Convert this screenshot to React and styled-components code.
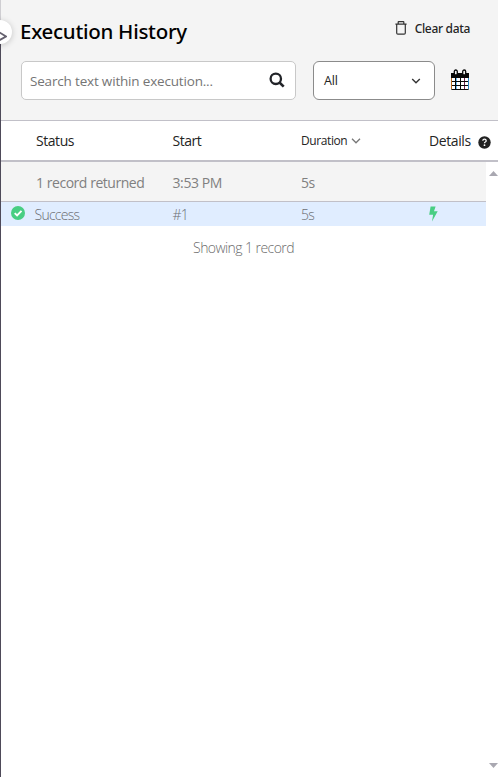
import React from 'react';
import styled, { createGlobalStyle } from 'styled-components';

const GlobalStyle = createGlobalStyle`
  * { box-sizing: border-box; }
  body { margin: 0; background: #fff; font-family: "Open Sans", "Noto Sans", sans-serif; overflow: hidden; }
`;

const Panel = styled.main`
  position: relative;
  height: 777px;
  width: 498px;
  padding-left: 1px;
  background: linear-gradient(to bottom, #cfced2 30px, #4e4a59 30px) left / 1px 100% no-repeat #fff;
  display: flex;
  flex-direction: column;
  overflow: hidden;
`;

const CollapseButton = styled.button`
  position: absolute;
  left: -12px;
  top: 20px;
  width: 24px;
  height: 24px;
  padding: 0;
  border: 0;
  border-radius: 50%;
  background: #fff;
  box-shadow: 0 1px 6px rgba(0, 0, 0, 0.2);
  svg { display: block; margin: 7px 0 0 9px; }
`;

const Header = styled.header`
  height: 121px;
  flex: none;
  background: #f4f4f4;
  border-bottom: 1px solid #c1c0c8;
  padding: 16px 28px 0 20px;
`;

const TitleRow = styled.div`
  display: flex;
  justify-content: space-between;
  height: 45px;
`;

const Label = styled.span`
  display: block;
  white-space: nowrap;
  font-size: ${(p) => p.$size || 14}px;
  font-weight: ${(p) => p.$weight || 400};
  letter-spacing: ${(p) => p.$spacing ?? -0.4}px;
  line-height: 20px;
  color: ${(p) => p.$color || '#242424'};
`;

const Title = styled.h1`
  margin: 0 0 0 -1px;
  font-family: "Noto Sans", "Open Sans", sans-serif;
  font-size: 20.5px;
  font-weight: 500;
  letter-spacing: -0.28px;
  line-height: 31px;
  color: #000;
  white-space: nowrap;
`;

const ClearButton = styled.button`
  display: flex;
  gap: 8px;
  height: 24px;
  border: 0;
  padding: 3px 0 0;
  background: none;
  font-family: "Noto Sans", "Open Sans", sans-serif;
  svg { margin-top: 2px; }
`;

const Filters = styled.div`
  display: flex;
  align-items: flex-start;
`;

const SearchBox = styled.div`
  width: 275px;
  height: 39px;
  display: flex;
  align-items: center;
  justify-content: space-between;
  padding: 0 10px 0 8px;
  border: 1px solid #c8c8c8;
  border-radius: 5px;
  background: #fff;
  svg { margin-top: -2px; }
`;

const Select = styled.div`
  width: 122px;
  height: 39px;
  margin-left: 17px;
  display: flex;
  align-items: center;
  justify-content: space-between;
  padding: 0 13px 0 10px;
  border: 1px solid #8b8b8b;
  border-radius: 6px;
  background: #fff;
`;

const CalendarButton = styled.button`
  margin: 8px 0 0 15px;
  padding: 0;
  border: 0;
  background: none;
  svg { display: block; }
`;

const Grid = styled.div`
  display: grid;
  grid-template-columns: ${(p) => p.$lead || 35}px ${(p) => 171.5 - (p.$lead || 35)}px 128.5px 128px 1fr;
  align-items: center;
`;

const TableHead = styled(Grid)`
  height: 41px;
  flex: none;
  padding-top: 1px;
  border-bottom: 2px solid #c1c0c8;
`;

const HeadCell = styled.div`
  display: flex;
  align-items: center;
  gap: ${(p) => p.$gap || 0}px;
`;

const HelpIcon = styled.svg`
  margin-top: 2px;
`;

const Body = styled.div`
  flex: 1;
  display: flex;
`;

const Records = styled.div`
  width: 485px;
`;

const SummaryRow = styled(Grid)`
  height: 40px;
  padding-top: 2px;
  background: #f4f4f4;
  border-bottom: 1px solid #c1c0c8;
`;

const RecordRow = styled(Grid)`
  height: 24px;
  padding-top: 2px;
  background: #e0edff;
`;

const StatusIcon = styled.div`
  padding-left: 10px;
  margin-top: -4px;
  svg { display: block; }
`;

const BoltIcon = styled.svg`
  margin-top: -2px;
`;

const Footer = styled.div`
  display: flex;
  justify-content: center;
  padding-top: 12px;
`;

const Scrollbar = styled.div`
  width: 12px;
  display: flex;
  flex-direction: column;
  justify-content: space-between;
  padding: 9px 0 9px 3px;
  svg { display: block; }
`;

export default function App() {
  return (
    <>
      <GlobalStyle />
      <Panel>
        <Header>
          <TitleRow>
            <Title>Execution History</Title>
            <ClearButton>
              <svg width="12" height="14" viewBox="0 0 12 14" fill="none" stroke="#333" strokeWidth="1.2">
                <path d="M.4 3.2h11.2M3.2 3V1q0-.4.4-.4h4.8q.4 0 .4.4v2M1.7 3v9q0 1.2 1.2 1.2h6.2q1.2 0 1.2-1.2V3" />
              </svg>
              <Label $size={12} $weight={500} $spacing={-0.32}>Clear data</Label>
            </ClearButton>
          </TitleRow>
          <Filters>
            <SearchBox>
              <Label $color="#757575" $size={13.5} $spacing={-0.18}>Search text within execution...</Label>
              <svg width="16" height="16" viewBox="0 0 16 16" fill="none" stroke="#222429">
                <circle cx="6.8" cy="6.8" r="5.2" strokeWidth="2.3" />
                <path d="M10.5 10.5l4.2 4.2" strokeWidth="2.6" />
              </svg>
            </SearchBox>
            <Select>
              <Label $size={12.5} $spacing={-0.1}>All</Label>
              <svg width="10" height="6" viewBox="0 0 10 6" fill="none" stroke="#333" strokeWidth="1.4">
                <path d="M1.2 1L5 4.7 8.8 1" />
              </svg>
            </Select>
            <CalendarButton>
              <svg width="20" height="22" viewBox="0 0 20 22">
                <path d="M1 4h18v15.5q0 1.5-1.5 1.5h-15Q1 21 1 19.5z" fill="#080808" />
                <path d="M2 9h3v3H2zM6 9h4v3H6zM11 9h3v3h-3zM15 9h3v3h-3zM2 13h3v3H2zM6 13h4v3H6zM11 13h3v3h-3zM15 13h3v3h-3zM2 17h3v3H2zM6 17h4v3H6zM11 17h3v3h-3zM15 17h3v3h-3z" fill="#fff" />
                <rect x="4.3" y="1" width="3" height="5" rx="1.5" fill="#f4f4f4" stroke="#080808" strokeWidth="1.3" />
                <rect x="12.7" y="1" width="3" height="5" rx="1.5" fill="#f4f4f4" stroke="#080808" strokeWidth="1.3" />
                <path d="M6.5 9v3M6.5 13v3M6.5 17v3" stroke="#62baf5" />
                <path d="M14.5 9v3M14.5 13v3M14.5 17v3" stroke="#70204f" />
                <path d="M18.5 9v11" stroke="#2c83c4" />
                <path d="M1.5 9v11" stroke="#b66a20" />
              </svg>
            </CalendarButton>
          </Filters>
        </Header>
        <TableHead>
          <span />
          <Label $spacing={-0.45}>Status</Label>
          <Label $spacing={-0.45}>Start</Label>
          <HeadCell $gap={4}>
            <Label $size={12} $spacing={-0.4}>Duration</Label>
            <svg width="10" height="6" viewBox="0 0 10 6" fill="none" stroke="#777" strokeWidth="1.3">
              <path d="M1 .8L5 4.8 9 .8" />
            </svg>
          </HeadCell>
          <HeadCell $gap={7}>
            <Label $spacing={-0.4}>Details</Label>
            <HelpIcon width="13" height="13" viewBox="0 0 13 13">
              <circle cx="6.5" cy="6.5" r="6.2" fill="#222" />
              <path d="M4.8 4.8q.1-1.6 1.7-1.6t1.7 1.5q0 .8-.9 1.3-.8.4-.8 1.2" fill="none" stroke="#fff" strokeWidth="1.3" />
              <circle cx="6.5" cy="9.2" r=".9" fill="#fff" />
            </HelpIcon>
          </HeadCell>
        </TableHead>
        <Body>
          <Records>
            <SummaryRow>
              <span />
              <Label $color="#808080" $spacing={-0.46}>1 record returned</Label>
              <Label $color="#808080" $spacing={-0.4}>3:53 PM</Label>
              <Label $color="#808080">5s</Label>
              <span />
            </SummaryRow>
            <RecordRow $lead={33.5}>
              <StatusIcon>
                <svg width="14" height="14" viewBox="0 0 14 14">
                  <circle cx="7" cy="7" r="7" fill="#48ce83" />
                  <path d="M3.7 7.1l2.4 2.4 4.4-4.6" fill="none" stroke="#fff" strokeWidth="1.9" />
                </svg>
              </StatusIcon>
              <Label $color="#6c6e73" $weight={300} $spacing={-0.75}>Success</Label>
              <Label $color="#6c6e73" $weight={300} $spacing={-0.8}>#1</Label>
              <Label $color="#6c6e73" $weight={300} $spacing={-0.7}>5s</Label>
              <BoltIcon width="9" height="16" viewBox="0 0 9 16">
                <path d="M1.6.5h5L5 5.3h3.7L3 15.5l1.1-6.7H.2z" fill="#48ce83" />
              </BoltIcon>
            </RecordRow>
            <Footer>
              <Label $color="#6c6c6c" $weight={300} $spacing={-0.57}>Showing 1 record</Label>
            </Footer>
          </Records>
          <Scrollbar>
            <svg width="9" height="5" viewBox="0 0 9 5"><path d="M0 5h9L4.5 0z" fill="#a9a8b1" /></svg>
            <svg width="9" height="5" viewBox="0 0 9 5"><path d="M0 0h9L4.5 5z" fill="#a9a8b1" /></svg>
          </Scrollbar>
        </Body>
        <CollapseButton aria-label="Collapse">
          <svg width="10" height="12" viewBox="0 0 10 12" fill="none" stroke="#65616f" strokeWidth="1.8">
            <path d="M1 1.5l8 5L1 11" />
          </svg>
        </CollapseButton>
      </Panel>
    </>
  );
}
